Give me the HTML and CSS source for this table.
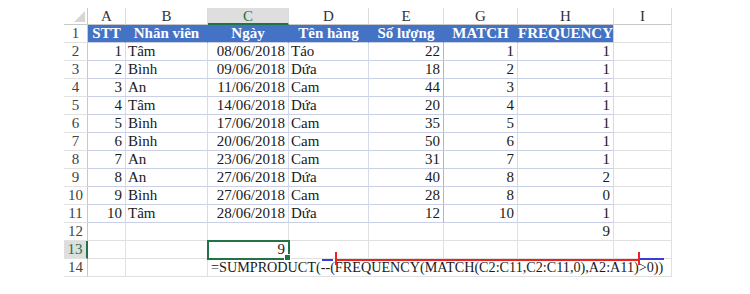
FILE: index.html
```html
<!DOCTYPE html>
<html>
<head>
<meta charset="utf-8">
<link rel="stylesheet" href="styles.css">
</head>
<body>
<div class="sheet">
  <div class="corner"><span class="tri"></span></div>
  <div class="hd">A</div><div class="hd">B</div><div class="hd hd-sel">C</div><div class="hd">D</div><div class="hd">E</div><div class="hd">G</div><div class="hd">H</div><div class="hd">I</div>

  <div class="rh">1</div>
  <div class="th">STT</div><div class="th">Nhân viên</div><div class="th">Ngày</div><div class="th">Tên hàng</div><div class="th">Số lượng</div><div class="th">MATCH</div><div class="th th-last">FREQUENCY</div><div class="c"></div>

  <div class="rh">2</div>
  <div class="tb n">1</div><div class="tb t">Tâm</div><div class="tb n">08/06/2018</div><div class="tb t">Táo</div><div class="tb n e">22</div><div class="tb n">1</div><div class="tb n">1</div><div class="c"></div>
  <div class="rh">3</div>
  <div class="tb n">2</div><div class="tb t">Bình</div><div class="tb n">09/06/2018</div><div class="tb t">Dứa</div><div class="tb n e">18</div><div class="tb n">2</div><div class="tb n">1</div><div class="c"></div>
  <div class="rh">4</div>
  <div class="tb n">3</div><div class="tb t">An</div><div class="tb n">11/06/2018</div><div class="tb t">Cam</div><div class="tb n e">44</div><div class="tb n">3</div><div class="tb n">1</div><div class="c"></div>
  <div class="rh">5</div>
  <div class="tb n">4</div><div class="tb t">Tâm</div><div class="tb n">14/06/2018</div><div class="tb t">Dứa</div><div class="tb n e">20</div><div class="tb n">4</div><div class="tb n">1</div><div class="c"></div>
  <div class="rh">6</div>
  <div class="tb n">5</div><div class="tb t">Bình</div><div class="tb n">17/06/2018</div><div class="tb t">Cam</div><div class="tb n e">35</div><div class="tb n">5</div><div class="tb n">1</div><div class="c"></div>
  <div class="rh">7</div>
  <div class="tb n">6</div><div class="tb t">Bình</div><div class="tb n">20/06/2018</div><div class="tb t">Cam</div><div class="tb n e">50</div><div class="tb n">6</div><div class="tb n">1</div><div class="c"></div>
  <div class="rh">8</div>
  <div class="tb n">7</div><div class="tb t">An</div><div class="tb n">23/06/2018</div><div class="tb t">Cam</div><div class="tb n e">31</div><div class="tb n">7</div><div class="tb n">1</div><div class="c"></div>
  <div class="rh">9</div>
  <div class="tb n">8</div><div class="tb t">An</div><div class="tb n">27/06/2018</div><div class="tb t">Dứa</div><div class="tb n e">40</div><div class="tb n">8</div><div class="tb n">2</div><div class="c"></div>
  <div class="rh">10</div>
  <div class="tb n">9</div><div class="tb t">Bình</div><div class="tb n">27/06/2018</div><div class="tb t">Cam</div><div class="tb n e">28</div><div class="tb n">8</div><div class="tb n">0</div><div class="c"></div>
  <div class="rh">11</div>
  <div class="tb n">10</div><div class="tb t">Tâm</div><div class="tb n">28/06/2018</div><div class="tb t">Dứa</div><div class="tb n e">12</div><div class="tb n">10</div><div class="tb n">1</div><div class="c"></div>

  <div class="rh">12</div>
  <div class="c"></div><div class="c"></div><div class="c"></div><div class="c"></div><div class="c"></div><div class="c"></div><div class="c n">9</div><div class="c"></div>

  <div class="rh rh-sel">13</div>
  <div class="c"></div><div class="c"></div><div class="c n sel">9</div><div class="c"></div><div class="c"></div><div class="c"></div><div class="c"></div><div class="c"></div>

  <div class="rh">14</div>
  <div class="c"></div><div class="c"></div><div class="c t formula">=SUMPRODUCT(--(FREQUENCY(MATCH(C2:C11,C2:C11,0),A2:A11)&gt;0))</div>

  <div class="mark blue b1"></div>
  <div class="mark red tick t1"></div>
  <div class="mark red line"></div>
  <div class="mark red tick t2"></div>
  <div class="mark blue b2"></div>
</div>
</body>
</html>
```

FILE: styles.css
```css
html, body {
  margin: 0;
  padding: 0;
  background: #ffffff;
}

body {
  font-family: "Liberation Serif", "Times New Roman", serif;
  font-size: 15px;
  color: #1a1a1a;
}

.sheet {
  position: relative;
  display: grid;
  grid-template-columns: 24px 38px 82px 81px 80px 75px 74px 96px 58px;
  grid-template-rows: 17px repeat(14, 18px);
  width: max-content;
  margin: 8px 0 0 64px;
}

.sheet > div {
  box-sizing: border-box;
  line-height: 17px;
  white-space: nowrap;
}

.corner {
  position: relative;
  border-right: 1px solid #c8c8c8;
  border-bottom: 1px solid #c8c8c8;
}

.tri {
  position: absolute;
  right: 2px;
  bottom: 2px;
  width: 0;
  height: 0;
  border-left: 11px solid transparent;
  border-bottom: 11px solid #d6d6d6;
}

.hd {
  text-align: center;
  color: #333333;
  border-right: 1px solid #dcdcdc;
  border-bottom: 1px solid #c8c8c8;
  line-height: 16px;
}

.hd-sel {
  background: #dedede;
  color: #217346;
  border-bottom: 2px solid #217346;
}

.rh {
  text-align: center;
  color: #444444;
  border-right: 1px solid #c8c8c8;
  border-bottom: 1px solid #e2e2e2;
}

.rh-sel {
  background: #dedede;
  color: #217346;
  border-right: 2px solid #217346;
}

.th {
  background: #4472c4;
  color: #ffffff;
  font-weight: bold;
  text-align: center;
  border-right: 1px solid #4472c4;
  border-bottom: 1px solid #c9d0e6;
}

.th-last {
  border-right: 1px solid #c9d0e6;
}

.tb {
  border-right: 1px solid #d4d9ec;
  border-bottom: 1px solid #c9d0e6;
}

.tb.e {
  border-right: 1px solid #a9b6de;
}

.c {
  border-right: 1px solid #e0e0e0;
  border-bottom: 1px solid #e0e0e0;
}

.n {
  text-align: right;
  padding-right: 3px;
}

.t {
  text-align: left;
  padding-left: 2px;
}

.sel {
  position: relative;
  outline: 2px solid #217346;
  outline-offset: -1px;
}

.sel::after {
  content: "";
  position: absolute;
  right: -3px;
  bottom: -3px;
  width: 5px;
  height: 5px;
  background: #217346;
  border: 1px solid #ffffff;
}

.formula {
  grid-column: span 6;
  padding-left: 3px;
  font-size: 14.2px;
}

.mark {
  position: absolute;
}

.blue {
  background: #3b3bd6;
  height: 2px;
}

.red {
  background: #ee2020;
}

.b1 {
  left: 258px;
  top: 251px;
  width: 11px;
}

.b2 {
  left: 576px;
  top: 250px;
  width: 24px;
}

.tick {
  width: 2px;
  height: 13px;
  top: 244px;
}

.t1 {
  left: 271px;
}

.t2 {
  left: 574px;
}

.line {
  left: 271px;
  top: 251px;
  width: 304px;
  height: 2px;
}
```
